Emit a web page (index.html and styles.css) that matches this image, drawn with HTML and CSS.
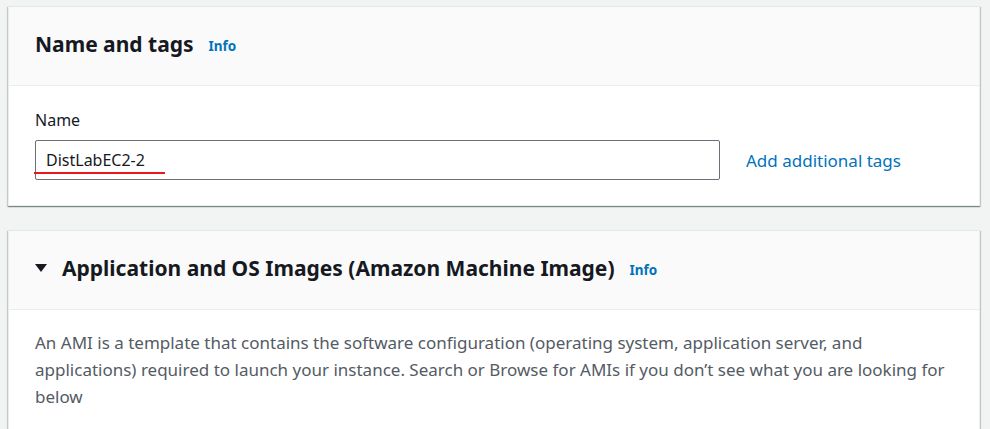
FILE: index.html
```html
<!DOCTYPE html>
<html>
<head>
<meta charset="utf-8">
<link rel="stylesheet" href="styles.css">
</head>
<body>
<div class="page">
  <section class="card">
    <header class="card-head">
      <h2 class="title">Name and tags</h2>
      <a class="info">Info</a>
    </header>
    <div class="card-body">
      <label class="label">Name</label>
      <div class="row">
        <div class="input-wrap">
          <div class="input">DistLabEC2-2</div>
          <span class="mark"></span>
        </div>
        <a class="link">Add additional tags</a>
      </div>
    </div>
  </section>
  <section class="card">
    <header class="card-head">
      <svg class="caret" width="12" height="10" viewBox="0 0 12 10"><path d="M0 1h12L6 9z" fill="#16191f"/></svg>
      <h2 class="title">Application and OS Images (Amazon Machine Image)</h2>
      <a class="info">Info</a>
    </header>
    <div class="card-body desc-body">
      <p class="desc">An AMI is a template that contains the software configuration (operating system, application server, and applications) required to launch your instance. Search or Browse for AMIs if you don’t see what you are looking for below</p>
    </div>
  </section>
</div>
</body>
</html>
```

FILE: styles.css
```css
html, body {
  margin: 0;
  padding: 0;
  background: #f2f3f3;
  font-family: "Noto Sans", "Open Sans", sans-serif;
  color: #16191f;
  overflow: hidden;
}
.page {
  padding: 6px 10px 0 8px;
  display: flex;
  flex-direction: column;
  gap: 24px;
}
.card {
  background: #fff;
  border: 1px solid #eaeded;
  border-top-color: #e4e6e6;
  box-shadow: 0 1px 1px 0 rgba(0,28,36,0.3), 1px 1px 1px 0 rgba(0,28,36,0.15), -1px 1px 1px 0 rgba(0,28,36,0.15);
}
.card-head {
  background: #fafafa;
  border-bottom: 1px solid #eaeded;
  height: 79px;
  box-sizing: border-box;
  display: flex;
  align-items: center;
  padding: 0 26px 4px;
  gap: 15px;
}
.title {
  margin: 0;
  font-size: 21px;
  font-weight: 700;
  line-height: 26px;
}
.info {
  color: #0073bb;
  font-size: 13.5px;
  font-weight: 700;
  margin-top: 4px;
}
.card-body {
  padding: 23px 26px 25px;
}
.desc-body {
  padding-top: 19px;
}
.label {
  display: block;
  font-size: 16px;
  line-height: 22px;
  margin-bottom: 9px;
}
.row {
  display: flex;
  align-items: center;
  gap: 26px;
}
.input-wrap {
  position: relative;
  width: 685px;
}
.input {
  border: 1px solid #687078;
  border-radius: 2px;
  box-sizing: border-box;
  height: 40px;
  padding: 0 10px;
  display: flex;
  align-items: center;
  font-size: 16px;
  color: #16191f;
}
.mark {
  position: absolute;
  left: -1px;
  top: 32px;
  width: 131px;
  height: 2px;
  background: #e8181f;
}
.link {
  color: #0073bb;
  font-size: 17px;
}
.desc {
  margin: 0;
  font-size: 17px;
  line-height: 27px;
  color: #545b64;
  max-width: 915px;
}
```
